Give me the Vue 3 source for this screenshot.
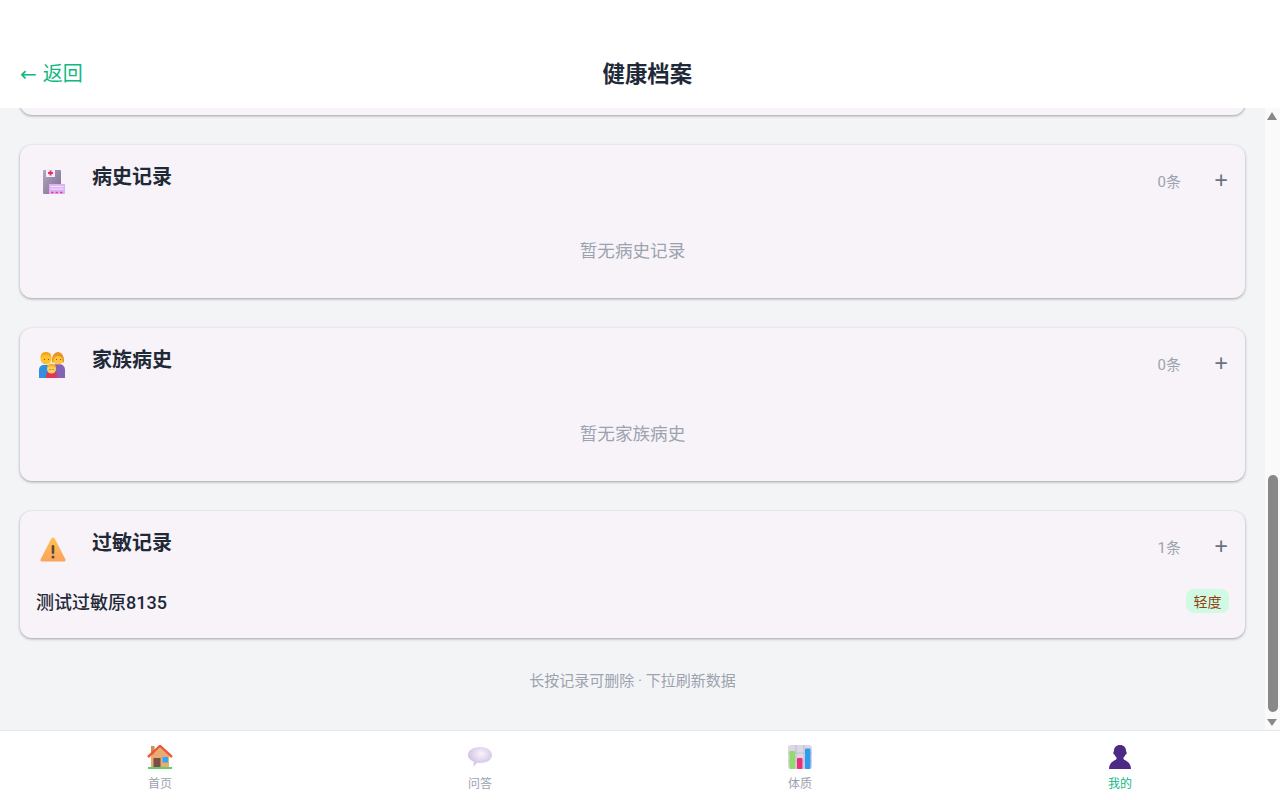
<template>
  <div class="page">
    <header class="top-bar">
      <span class="back">← 返回</span>
      <h1 class="page-title">健康档案</h1>
      <span class="top-spacer"></span>
    </header>

    <div class="body-row">
      <main class="content">
        <section class="card card-earlier"></section>

        <section class="card">
          <div class="card-head">
            <span class="card-icon">
              <svg width="26" height="26" viewBox="0 0 26 26">
                <defs>
                  <linearGradient id="hosp" x1="0" y1="0" x2="1" y2="1">
                    <stop offset="0" stop-color="#b3a9bd" />
                    <stop offset="1" stop-color="#7d6a92" />
                  </linearGradient>
                </defs>
                <rect x="4" y="1" width="18" height="24" rx="1" fill="url(#hosp)" />
                <rect x="7" y="0" width="9" height="8" fill="#f3eef6" />
                <path d="M10.500 1.500h2v1.500h1.500v2H12.500v1.500h-2V5H9V3h1.500z" fill="#e8316f" />
                <rect x="10" y="15" width="16" height="10" fill="#dcb2f2" />
                <path d="M11.500 17.500h13M11.500 20h13" stroke="#f3e6fb" stroke-width="1" />
                <path d="M12 23.500h2.500M16.500 23.500h2.500M21 23.500h2.500" stroke="#e03fa8" stroke-width="1.500" />
              </svg>
            </span>
            <h2 class="card-title">病史记录</h2>
            <span class="count">0条</span>
            <span class="add">+</span>
          </div>
          <p class="empty">暂无病史记录</p>
        </section>

        <section class="card">
          <div class="card-head">
            <span class="card-icon">
              <svg width="26" height="28" viewBox="0 0 26 28">
                <path d="M0 27v-8c0-3 2-5 5-5h3c3 0 4 2 4 5v8z" fill="#2f8fe0" />
                <path d="M12 27v-8c0-3 2-6 6-6h2c4 0 6 3 6 6v8z" fill="#8263b5" />
                <circle cx="7" cy="8" r="5.500" fill="#ffc02e" />
                <path d="M1.500 7c0-4 2-6 5.500-6s5.500 2 5.500 6c-1-2-2-3-5.500-3s-4.500 1-5.500 3z" fill="#f8a51c" />
                <circle cx="19" cy="8" r="5.500" fill="#ffc43c" />
                <path d="M13 11c-.5-6 2.500-10 6-10s6.500 4 6 10l-1.500 1c.5-4-1-7-4.500-7s-5 3-4.500 7z" fill="#ea9520" />
                <path d="M5 8.500h1M9 8.500h1M17 8.500h1M21 8.500h1" stroke="#7a5a30" stroke-width="1" />
                <path d="M7 27v-3c0-2 2-4 5.500-4s5.500 2 5.500 4v3z" fill="#e0365a" />
                <circle cx="12.500" cy="18" r="4.500" fill="#ffd05a" />
                <path d="M8 17c0-3 2-4.500 4.500-4.500s4.500 1.500 4.500 4.500c-1-2-7-2-9 0z" fill="#f9b02e" />
                <path d="M10.500 18.500h1M13.500 18.500h1" stroke="#7a5a30" stroke-width="1" />
              </svg>
            </span>
            <h2 class="card-title">家族病史</h2>
            <span class="count">0条</span>
            <span class="add">+</span>
          </div>
          <p class="empty">暂无家族病史</p>
        </section>

        <section class="card">
          <div class="card-head">
            <span class="card-icon warn-icon">
              <svg width="26" height="25" viewBox="0 0 26 25">
                <defs>
                  <linearGradient id="warn" x1="0" y1="0" x2="0" y2="1">
                    <stop offset="0" stop-color="#ffc24d" />
                    <stop offset="1" stop-color="#fba35f" />
                  </linearGradient>
                </defs>
                <path d="M11.300 1.500c.8-1.400 2.600-1.400 3.400 0l10.800 21c.4.900-.2 2-1.300 2H1.800C.7 24.500.1 23.400.5 22.500z" fill="url(#warn)" />
                <rect x="11.700" y="8" width="2.600" height="9" rx="1.300" fill="#5c4a3c" />
                <circle cx="13" cy="20" r="1.500" fill="#5c4a3c" />
              </svg>
            </span>
            <h2 class="card-title">过敏记录</h2>
            <span class="count">1条</span>
            <span class="add">+</span>
          </div>
          <div class="record">
            <span class="record-name">测试过敏原8135</span>
            <span class="badge">轻度</span>
          </div>
        </section>

        <p class="hint">长按记录可删除 · 下拉刷新数据</p>
      </main>

      <div class="scrollbar">
        <span class="scroll-btn">
          <svg width="10" height="8" viewBox="0 0 10 8"><path d="M5 0l5 8H0z" fill="#888" /></svg>
        </span>
        <div class="scroll-track">
          <div class="scroll-thumb"></div>
        </div>
        <span class="scroll-btn">
          <svg width="10" height="7" viewBox="0 0 10 7"><path d="M0 0h10L5 7z" fill="#888" /></svg>
        </span>
      </div>
    </div>

    <nav class="tabs">
      <div v-for="tab in tabs" :key="tab.label" class="tab" :class="{ active: tab.active }">
        <span class="tab-icon">
          <svg v-if="tab.icon === 'home'" width="26" height="24" viewBox="0 0 26 24">
            <rect x="4" y="1" width="3.500" height="9" fill="#c98f5c" />
            <path d="M4 11L13 3l9 8v12H4z" fill="#e9ab76" />
            <path d="M1 12L13 1l12 11" fill="none" stroke="#ee5a30" stroke-width="2.400" stroke-linejoin="round" />
            <rect x="6.500" y="13" width="7" height="9" fill="#7a4f45" />
            <rect x="15.500" y="12" width="5.500" height="5.500" fill="#2fa8f5" />
            <rect x="1" y="22" width="24" height="2" fill="#5fcf6d" />
          </svg>
          <svg v-else-if="tab.icon === 'chat'" width="24" height="20" viewBox="0 0 24 20">
            <defs>
              <radialGradient id="chat" cx="0.55" cy="0.35" r="0.7">
                <stop offset="0" stop-color="#f8f3fb" />
                <stop offset="1" stop-color="#c8b6de" />
              </radialGradient>
            </defs>
            <path d="M12 0c6.500 0 12 3 12 8s-5.500 8-12 8c-1 0-2 0-3-.2L5.500 19.500 6 14.800C2.500 13.400 0 11 0 8c0-5 5.500-8 12-8z" fill="url(#chat)" />
          </svg>
          <svg v-else-if="tab.icon === 'chart'" width="24" height="24" viewBox="0 0 24 24">
            <rect width="24" height="24" rx="3" fill="#dcd7e4" />
            <path d="M8 0v24M16 0v24M0 8h24M0 16h24" stroke="#bcb6c8" stroke-width="0.800" />
            <rect x="1.500" y="6" width="5.500" height="18" rx="1" fill="#8fdc6a" />
            <rect x="9" y="13" width="5.500" height="11" rx="1" fill="#ee2f78" />
            <rect x="17" y="3.500" width="5.500" height="20.500" rx="1" fill="#2f9cf0" />
          </svg>
          <svg v-else width="22" height="24" viewBox="0 0 22 24">
            <path d="M11 0c3.800 0 6 2.500 6 5.500 0 1 .7 1.300.7 2.600 0 1-.7 1.600-1.300 1.700-.4 1.200-1 2.100-1.900 2.800v1.100c0 1.800 7.200 1.800 7.500 10.300H0c.3-8.500 7.500-8.500 7.500-10.300v-1.100c-.9-.7-1.500-1.600-1.900-2.800C5 9.700 4.300 9.100 4.300 8.100c0-1.300.7-1.600.7-2.600C5 2.500 7.200 0 11 0z" fill="#4c2a85" />
          </svg>
        </span>
        <span class="tab-label">{{ tab.label }}</span>
      </div>
    </nav>
  </div>
</template>

<script setup>
const tabs = [
  { label: '首页', icon: 'home' },
  { label: '问答', icon: 'chat' },
  { label: '体质', icon: 'chart' },
  { label: '我的', icon: 'person', active: true },
];
</script>

<style>
html,
body {
  margin: 0;
  height: 100%;
  overflow: hidden;
}
</style>

<style scoped>
.page {
  height: 100vh;
  display: flex;
  flex-direction: column;
  background: #f3f4f6;
  font-family: Roboto, "Noto Sans CJK SC", sans-serif;
  color: #1f2937;
}

.top-bar {
  flex: none;
  height: 108px;
  box-sizing: border-box;
  padding: 36px 20px 0;
  display: flex;
  align-items: center;
  justify-content: space-between;
  background: #fff;
}

.back {
  font-family: Roboto, "DejaVu Sans", "Noto Sans CJK SC", sans-serif;
  font-size: 20px;
  word-spacing: 1px;
  color: #10b981;
}

.page-title {
  margin: 0;
  font-size: 22.400px;
  font-weight: 700;
  color: #1f2937;
}

.top-spacer {
  width: 48px;
}

.body-row {
  flex: 1;
  min-height: 0;
  display: flex;
}

.content {
  flex: 1;
  min-width: 0;
  overflow: hidden;
  padding: 0 20px;
  display: flex;
  flex-direction: column;
  justify-content: flex-end;
}

.scrollbar {
  flex: none;
  width: 15px;
  display: flex;
  flex-direction: column;
  background: #fafafa;
}

.scroll-btn {
  height: 15px;
  padding-left: 2px;
  display: flex;
  align-items: center;
}

.scroll-track {
  flex: 1;
  padding: 0 2px 3px 3px;
  display: flex;
  flex-direction: column;
  justify-content: flex-end;
}

.scroll-thumb {
  height: 237px;
  border-radius: 5px;
  background: #888;
}

.card {
  flex: none;
  box-sizing: border-box;
  margin-bottom: 30px;
  padding: 16px;
  border-radius: 12px;
  background: #f7f3f9;
  box-shadow: 0 1px 3px rgba(0, 0, 0, 0.35);
}

.card-earlier {
  height: 60px;
}

.card-head {
  height: 42px;
  display: flex;
  align-items: center;
}

.card-icon {
  flex: none;
  width: 56px;
  padding-left: 3px;
  box-sizing: border-box;
  display: flex;
  align-items: center;
}

.warn-icon {
  padding: 2px 0 0 4px;
}

.card-title {
  margin: 0 0 11px;
  flex: 1;
  font-size: 20px;
  line-height: 28px;
  font-weight: 700;
  color: #1f2937;
}

.count {
  margin-bottom: 4px;
  font-size: 15px;
  color: #9ca3af;
}

.add {
  width: 16px;
  margin: 0 0 5px 32px;
  text-align: center;
  font-family: "Noto Sans", sans-serif;
  font-size: 24px;
  line-height: 24px;
  color: #6b7280;
}

.empty {
  margin: 0;
  height: 79px;
  box-sizing: border-box;
  padding-top: 36px;
  text-align: center;
  font-size: 17.600px;
  line-height: 24px;
  color: #9ca3af;
}

.record {
  margin-top: 13px;
  padding-bottom: 2px;
  height: 38px;
  display: flex;
  align-items: center;
  justify-content: space-between;
}

.record-name {
  font-size: 18px;
  font-weight: 500;
  color: #1f2937;
}

.badge {
  height: 24px;
  width: 43px;
  box-sizing: border-box;
  display: flex;
  align-items: center;
  justify-content: center;
  border-radius: 8px;
  background: #d1fae5;
  font-size: 14px;
  color: #92400e;
}

.hint {
  flex: none;
  margin: 0;
  padding: 2px 0 38px;
  text-align: center;
  font-size: 15px;
  line-height: 22px;
  color: #9ca3af;
}

.tabs {
  flex: none;
  height: 70px;
  box-sizing: border-box;
  display: grid;
  grid-template-columns: repeat(4, 1fr);
  background: #fff;
  border-top: 1px solid #e5e7eb;
}

.tab {
  display: flex;
  flex-direction: column;
  align-items: center;
  padding-top: 14px;
  color: #9ca3af;
}

.tab.active {
  color: #10b981;
}

.tab-icon {
  height: 24px;
  display: flex;
  align-items: center;
}

.tab-label {
  margin-top: 7px;
  font-size: 12px;
  line-height: 16px;
}
</style>
